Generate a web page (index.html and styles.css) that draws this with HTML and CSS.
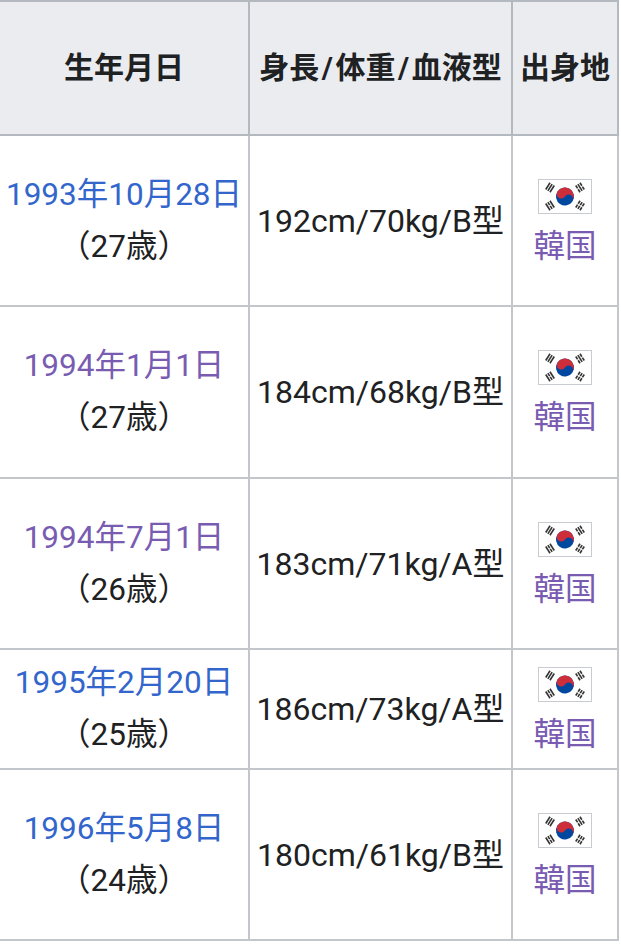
FILE: index.html
```html
<!DOCTYPE html>
<html lang="ja">
<head>
<meta charset="utf-8">
<title>table</title>
<link rel="stylesheet" href="styles.css">
</head>
<body>
<table class="info">
  <colgroup><col class="c1"><col class="c2"><col class="c3"></colgroup>
  <thead>
    <tr class="hrow"><th>生年月日</th><th>身長<span class="sep">/</span>体重<span class="sep">/</span>血液型</th><th>出身地</th></tr>
  </thead>
  <tbody>
    <tr class="tall"><td><a class="link">1993年10月28日</a><br>（27歳）</td><td class="phys">192cm/70kg/B型</td><td class="from"><span class="flag"><svg width="54" height="35" viewBox="0 0 54 35"><rect x="0.5" y="0.5" width="53" height="34" fill="#fff" stroke="#c8ccd1"/><g transform="rotate(33.7 27 17.5)"><circle cx="27" cy="17.5" r="9" fill="#0047a0"/><path d="M18 17.5A9 9 0 0 1 36 17.5A4.5 4.5 0 0 0 27 17.5A4.5 4.5 0 0 1 18 17.5Z" fill="#cd2e3a"/></g><g fill="#333"><g transform="translate(12 8.5) rotate(-57.7)"><rect x="-4" y="-3.3" width="8" height="1.6"/><rect x="-4" y="-0.8" width="8" height="1.6"/><rect x="-4" y="1.7" width="8" height="1.6"/></g><g transform="translate(42 8.5) rotate(57.7)"><rect x="-4" y="-3.3" width="3.5" height="1.6"/><rect x="0.5" y="-3.3" width="3.5" height="1.6"/><rect x="-4" y="-0.8" width="8" height="1.6"/><rect x="-4" y="1.7" width="3.5" height="1.6"/><rect x="0.5" y="1.7" width="3.5" height="1.6"/></g><g transform="translate(12 26.5) rotate(57.7)"><rect x="-4" y="-3.3" width="8" height="1.6"/><rect x="-4" y="-0.8" width="3.5" height="1.6"/><rect x="0.5" y="-0.8" width="3.5" height="1.6"/><rect x="-4" y="1.7" width="8" height="1.6"/></g><g transform="translate(42 26.5) rotate(-57.7)"><rect x="-4" y="-3.3" width="3.5" height="1.6"/><rect x="0.5" y="-3.3" width="3.5" height="1.6"/><rect x="-4" y="-0.8" width="3.5" height="1.6"/><rect x="0.5" y="-0.8" width="3.5" height="1.6"/><rect x="-4" y="1.7" width="3.5" height="1.6"/><rect x="0.5" y="1.7" width="3.5" height="1.6"/></g></g></svg></span><br><a class="visited">韓国</a></td></tr>
    <tr class="tall2"><td><a class="visited">1994年1月1日</a><br>（27歳）</td><td class="phys">184cm/68kg/B型</td><td class="from"><span class="flag"><svg width="54" height="35" viewBox="0 0 54 35"><rect x="0.5" y="0.5" width="53" height="34" fill="#fff" stroke="#c8ccd1"/><g transform="rotate(33.7 27 17.5)"><circle cx="27" cy="17.5" r="9" fill="#0047a0"/><path d="M18 17.5A9 9 0 0 1 36 17.5A4.5 4.5 0 0 0 27 17.5A4.5 4.5 0 0 1 18 17.5Z" fill="#cd2e3a"/></g><g fill="#333"><g transform="translate(12 8.5) rotate(-57.7)"><rect x="-4" y="-3.3" width="8" height="1.6"/><rect x="-4" y="-0.8" width="8" height="1.6"/><rect x="-4" y="1.7" width="8" height="1.6"/></g><g transform="translate(42 8.5) rotate(57.7)"><rect x="-4" y="-3.3" width="3.5" height="1.6"/><rect x="0.5" y="-3.3" width="3.5" height="1.6"/><rect x="-4" y="-0.8" width="8" height="1.6"/><rect x="-4" y="1.7" width="3.5" height="1.6"/><rect x="0.5" y="1.7" width="3.5" height="1.6"/></g><g transform="translate(12 26.5) rotate(57.7)"><rect x="-4" y="-3.3" width="8" height="1.6"/><rect x="-4" y="-0.8" width="3.5" height="1.6"/><rect x="0.5" y="-0.8" width="3.5" height="1.6"/><rect x="-4" y="1.7" width="8" height="1.6"/></g><g transform="translate(42 26.5) rotate(-57.7)"><rect x="-4" y="-3.3" width="3.5" height="1.6"/><rect x="0.5" y="-3.3" width="3.5" height="1.6"/><rect x="-4" y="-0.8" width="3.5" height="1.6"/><rect x="0.5" y="-0.8" width="3.5" height="1.6"/><rect x="-4" y="1.7" width="3.5" height="1.6"/><rect x="0.5" y="1.7" width="3.5" height="1.6"/></g></g></svg></span><br><a class="visited">韓国</a></td></tr>
    <tr class="tall"><td><a class="visited">1994年7月1日</a><br>（26歳）</td><td class="phys">183cm/71kg/A型</td><td class="from"><span class="flag"><svg width="54" height="35" viewBox="0 0 54 35"><rect x="0.5" y="0.5" width="53" height="34" fill="#fff" stroke="#c8ccd1"/><g transform="rotate(33.7 27 17.5)"><circle cx="27" cy="17.5" r="9" fill="#0047a0"/><path d="M18 17.5A9 9 0 0 1 36 17.5A4.5 4.5 0 0 0 27 17.5A4.5 4.5 0 0 1 18 17.5Z" fill="#cd2e3a"/></g><g fill="#333"><g transform="translate(12 8.5) rotate(-57.7)"><rect x="-4" y="-3.3" width="8" height="1.6"/><rect x="-4" y="-0.8" width="8" height="1.6"/><rect x="-4" y="1.7" width="8" height="1.6"/></g><g transform="translate(42 8.5) rotate(57.7)"><rect x="-4" y="-3.3" width="3.5" height="1.6"/><rect x="0.5" y="-3.3" width="3.5" height="1.6"/><rect x="-4" y="-0.8" width="8" height="1.6"/><rect x="-4" y="1.7" width="3.5" height="1.6"/><rect x="0.5" y="1.7" width="3.5" height="1.6"/></g><g transform="translate(12 26.5) rotate(57.7)"><rect x="-4" y="-3.3" width="8" height="1.6"/><rect x="-4" y="-0.8" width="3.5" height="1.6"/><rect x="0.5" y="-0.8" width="3.5" height="1.6"/><rect x="-4" y="1.7" width="8" height="1.6"/></g><g transform="translate(42 26.5) rotate(-57.7)"><rect x="-4" y="-3.3" width="3.5" height="1.6"/><rect x="0.5" y="-3.3" width="3.5" height="1.6"/><rect x="-4" y="-0.8" width="3.5" height="1.6"/><rect x="0.5" y="-0.8" width="3.5" height="1.6"/><rect x="-4" y="1.7" width="3.5" height="1.6"/><rect x="0.5" y="1.7" width="3.5" height="1.6"/></g></g></svg></span><br><a class="visited">韓国</a></td></tr>
    <tr class="short"><td><a class="link">1995年2月20日</a><br>（25歳）</td><td class="phys">186cm/73kg/A型</td><td class="from"><span class="flag"><svg width="54" height="35" viewBox="0 0 54 35"><rect x="0.5" y="0.5" width="53" height="34" fill="#fff" stroke="#c8ccd1"/><g transform="rotate(33.7 27 17.5)"><circle cx="27" cy="17.5" r="9" fill="#0047a0"/><path d="M18 17.5A9 9 0 0 1 36 17.5A4.5 4.5 0 0 0 27 17.5A4.5 4.5 0 0 1 18 17.5Z" fill="#cd2e3a"/></g><g fill="#333"><g transform="translate(12 8.5) rotate(-57.7)"><rect x="-4" y="-3.3" width="8" height="1.6"/><rect x="-4" y="-0.8" width="8" height="1.6"/><rect x="-4" y="1.7" width="8" height="1.6"/></g><g transform="translate(42 8.5) rotate(57.7)"><rect x="-4" y="-3.3" width="3.5" height="1.6"/><rect x="0.5" y="-3.3" width="3.5" height="1.6"/><rect x="-4" y="-0.8" width="8" height="1.6"/><rect x="-4" y="1.7" width="3.5" height="1.6"/><rect x="0.5" y="1.7" width="3.5" height="1.6"/></g><g transform="translate(12 26.5) rotate(57.7)"><rect x="-4" y="-3.3" width="8" height="1.6"/><rect x="-4" y="-0.8" width="3.5" height="1.6"/><rect x="0.5" y="-0.8" width="3.5" height="1.6"/><rect x="-4" y="1.7" width="8" height="1.6"/></g><g transform="translate(42 26.5) rotate(-57.7)"><rect x="-4" y="-3.3" width="3.5" height="1.6"/><rect x="0.5" y="-3.3" width="3.5" height="1.6"/><rect x="-4" y="-0.8" width="3.5" height="1.6"/><rect x="0.5" y="-0.8" width="3.5" height="1.6"/><rect x="-4" y="1.7" width="3.5" height="1.6"/><rect x="0.5" y="1.7" width="3.5" height="1.6"/></g></g></svg></span><br><a class="visited">韓国</a></td></tr>
    <tr class="tall"><td><a class="link">1996年5月8日</a><br>（24歳）</td><td class="phys">180cm/61kg/B型</td><td class="from"><span class="flag"><svg width="54" height="35" viewBox="0 0 54 35"><rect x="0.5" y="0.5" width="53" height="34" fill="#fff" stroke="#c8ccd1"/><g transform="rotate(33.7 27 17.5)"><circle cx="27" cy="17.5" r="9" fill="#0047a0"/><path d="M18 17.5A9 9 0 0 1 36 17.5A4.5 4.5 0 0 0 27 17.5A4.5 4.5 0 0 1 18 17.5Z" fill="#cd2e3a"/></g><g fill="#333"><g transform="translate(12 8.5) rotate(-57.7)"><rect x="-4" y="-3.3" width="8" height="1.6"/><rect x="-4" y="-0.8" width="8" height="1.6"/><rect x="-4" y="1.7" width="8" height="1.6"/></g><g transform="translate(42 8.5) rotate(57.7)"><rect x="-4" y="-3.3" width="3.5" height="1.6"/><rect x="0.5" y="-3.3" width="3.5" height="1.6"/><rect x="-4" y="-0.8" width="8" height="1.6"/><rect x="-4" y="1.7" width="3.5" height="1.6"/><rect x="0.5" y="1.7" width="3.5" height="1.6"/></g><g transform="translate(12 26.5) rotate(57.7)"><rect x="-4" y="-3.3" width="8" height="1.6"/><rect x="-4" y="-0.8" width="3.5" height="1.6"/><rect x="0.5" y="-0.8" width="3.5" height="1.6"/><rect x="-4" y="1.7" width="8" height="1.6"/></g><g transform="translate(42 26.5) rotate(-57.7)"><rect x="-4" y="-3.3" width="3.5" height="1.6"/><rect x="0.5" y="-3.3" width="3.5" height="1.6"/><rect x="-4" y="-0.8" width="3.5" height="1.6"/><rect x="0.5" y="-0.8" width="3.5" height="1.6"/><rect x="-4" y="1.7" width="3.5" height="1.6"/><rect x="0.5" y="1.7" width="3.5" height="1.6"/></g></g></svg></span><br><a class="visited">韓国</a></td></tr>
  </tbody>
</table>
</body>
</html>
```

FILE: styles.css
```css
html, body {
  margin: 0;
  padding: 0;
  background: #fff;
}

body {
  font-family: Roboto, "Noto Sans CJK JP", sans-serif;
  color: #202122;
  overflow: hidden;
}

.info {
  border-collapse: collapse;
  table-layout: fixed;
  width: 621px;
  margin-left: -2px;
  font-size: 31.5px;
}

.c1 { width: 250px; }
.c2 { width: 263px; }
.c3 { width: 106px; }

.info th,
.info td {
  border: 2px solid #c3c7cc;
  padding: 0;
  text-align: center;
  vertical-align: middle;
  white-space: nowrap;
}

.info th {
  background: #eaecf0;
  font-weight: bold;
  font-size: 30px;
  line-height: 40px;
  border-color: #b4b9bf;
}

.sep {
  padding: 0 2.5px;
}

.info td {
  line-height: 52px;
}

.info td.phys {
  font-size: 32px;
}

.hrow { height: 134px; }
.tall { height: 171px; }
.tall2 { height: 172px; }
.short { height: 120px; }

.link { color: #3366cc; text-decoration: none; }
.visited { color: #795cb2; text-decoration: none; }

.flag {
  display: inline-block;
  width: 54px;
  height: 35px;
  vertical-align: middle;
  line-height: 0;
}

.flag svg { display: block; }
```
